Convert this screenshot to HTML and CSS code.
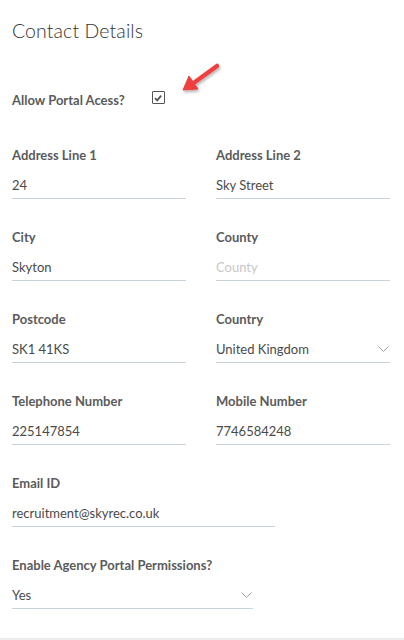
FILE: index.html
```html
<!DOCTYPE html>
<html lang="en">
<head>
<meta charset="utf-8">
<title>Contact Details</title>
<link rel="stylesheet" href="styles.css">
</head>
<body>
<div class="panel">
  <h1 class="title">Contact Details</h1>

  <div class="portal-row">
    <span class="label">Allow Portal Acess?</span>
    <span class="checkbox">
      <svg width="10" height="10" viewBox="0 0 10 10"><path d="M2 5.2 L4.2 7.4 L8.2 2.6" fill="none" stroke="#555" stroke-width="1.8"/></svg>
    </span>
    <svg class="arrow" width="60" height="50" viewBox="0 0 60 50">
      <defs>
        <filter id="sh" x="-30%" y="-30%" width="160%" height="160%">
          <feDropShadow dx="1" dy="2" stdDeviation="1.5" flood-color="#000" flood-opacity="0.3"/>
        </filter>
      </defs>
      <g filter="url(#sh)" fill="#ef4040" stroke="#ef4040">
        <line x1="48" y1="10" x2="26" y2="26" stroke-width="4.5" stroke-linecap="round"/>
        <polygon points="14,34 20,20 29,33" stroke-width="1" stroke-linejoin="round"/>
      </g>
    </svg>
  </div>

  <div class="grid">
    <div class="field">
      <div class="label">Address Line 1</div>
      <div class="input">24</div>
    </div>
    <div class="field">
      <div class="label">Address Line 2</div>
      <div class="input">Sky Street</div>
    </div>
    <div class="field">
      <div class="label">City</div>
      <div class="input">Skyton</div>
    </div>
    <div class="field">
      <div class="label">County</div>
      <div class="input placeholder">County</div>
    </div>
    <div class="field">
      <div class="label">Postcode</div>
      <div class="input">SK1 41KS</div>
    </div>
    <div class="field">
      <div class="label">Country</div>
      <div class="input select">United Kingdom
        <svg class="chev" width="11" height="6" viewBox="0 0 11 6"><path d="M0.5 0.5 L5.5 5.5 L10.5 0.5" fill="none" stroke="#a0a0a0" stroke-width="1"/></svg>
      </div>
    </div>
    <div class="field">
      <div class="label">Telephone Number</div>
      <div class="input">225147854</div>
    </div>
    <div class="field">
      <div class="label">Mobile Number</div>
      <div class="input">7746584248</div>
    </div>
    <div class="field wide-email">
      <div class="label">Email ID</div>
      <div class="input">recruitment@skyrec.co.uk</div>
    </div>
    <div class="field wide-select">
      <div class="label">Enable Agency Portal Permissions?</div>
      <div class="input select">Yes
        <svg class="chev" width="11" height="6" viewBox="0 0 11 6"><path d="M0.5 0.5 L5.5 5.5 L10.5 0.5" fill="none" stroke="#a0a0a0" stroke-width="1"/></svg>
      </div>
    </div>
  </div>
</div>
</body>
</html>
```
FILE: styles.css
```css
html, body {
  margin: 0;
  padding: 0;
  background: #fff;
}
body {
  font-family: Lato, "Open Sans", sans-serif;
  color: #4a4a4a;
}
.panel {
  box-sizing: border-box;
  height: 640px;
  padding: 19px 14px 0 12px;
  border-bottom: 2px solid #ececec;
}
.title {
  margin: 0;
  font-size: 19.5px;
  line-height: 24px;
  font-weight: 300;
  color: #333;
  letter-spacing: 0.1px;
}
.label {
  font-size: 13px;
  line-height: 20px;
  font-weight: 700;
  color: #5b5b5b;
}
.portal-row {
  position: relative;
  display: flex;
  align-items: center;
  margin-top: 47px;
  height: 20px;
}
.checkbox {
  display: flex;
  align-items: center;
  justify-content: center;
  box-sizing: border-box;
  width: 13px;
  height: 13px;
  margin-left: 27px;
  margin-top: -5px;
  border: 1.5px solid #555;
  border-radius: 1px;
  background: #fff;
}
.arrow {
  position: absolute;
  left: 157px;
  top: -34px;
}
.grid {
  display: grid;
  grid-template-columns: 174px 174px;
  column-gap: 30px;
  row-gap: 28px;
  margin-top: 35px;
}
.field {
  display: flex;
  flex-direction: column;
  gap: 6px;
}
.input {
  box-sizing: border-box;
  height: 28px;
  display: flex;
  align-items: center;
  justify-content: space-between;
  font-size: 13px;
  color: #4a4a4a;
  border-bottom: 1px solid #c9d3dc;
  padding-bottom: 0;
}
.placeholder {
  color: #c8c8c8;
}
.chev {
  margin-right: 1px;
  margin-top: 1px;
}
.wide-email {
  grid-column: 1 / 3;
  width: 263px;
}
.wide-select {
  grid-column: 1 / 3;
  width: 241px;
}
```
